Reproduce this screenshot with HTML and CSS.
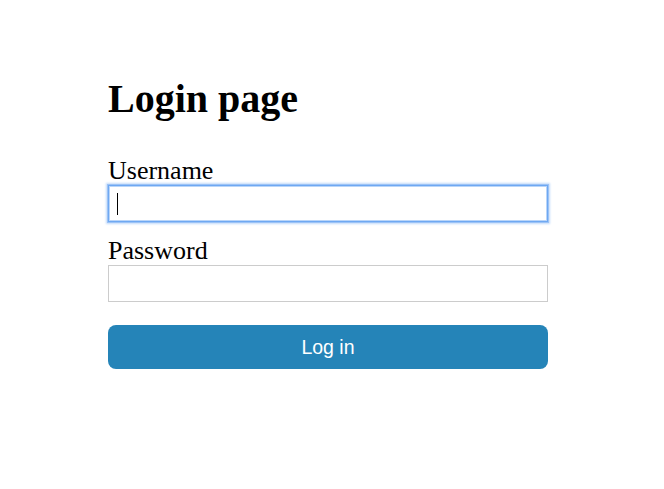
FILE: index.html
```html
<!DOCTYPE html>
<html>
<head>
  <title>Login page</title>
  <link rel="stylesheet" href="styles.css">
</head>
<body>
  <div class="login">
    <h1>Login page</h1>
    <form class="form">
      <label class="label" for="username">Username</label>
      <div class="field focused">
        <input id="username" class="input" type="text">
        <span class="caret"></span>
      </div>
      <label class="label" for="password">Password</label>
      <div class="field">
        <input id="password" class="input" type="password">
      </div>
      <button class="btn" type="button">Log in</button>
    </form>
  </div>
</body>
</html>
```

FILE: styles.css
```css
body {
  margin: 8px;
  font-family: "Liberation Serif", "Times New Roman", serif;
  color: #000;
  background: #fff;
}

.login {
  width: 440px;
  margin-left: 100px;
  padding-top: 68px;
}

h1 {
  font-size: 40px;
  font-weight: bold;
  line-height: 46px;
  margin: 0 0 35px 0;
}

.form {
  display: flex;
  flex-direction: column;
}

.label {
  font-size: 26px;
  line-height: 28px;
}

.field {
  position: relative;
  margin-bottom: 15px;
}

.input {
  display: block;
  box-sizing: border-box;
  width: 440px;
  height: 37px;
  margin: 0;
  padding: 0 8px;
  border: 1px solid #cccccc;
  border-radius: 0;
  font-size: 16px;
  outline: none;
  background: #fff;
}

.focused .input {
  border: 1px solid #6ea8f2;
  box-shadow: 0 0 0 1px #9cc3f6, 0 0 2px 2px #c4dbfa, inset 0 0 0 1px #b9d5f9;
}

.caret {
  position: absolute;
  left: 9px;
  top: 8px;
  width: 1px;
  height: 22px;
  background: #000;
}

.btn {
  margin-top: 8px;
  height: 44px;
  width: 440px;
  border: none;
  border-radius: 8px;
  background: #2584b8;
  color: #fff;
  font-family: "Liberation Sans", Arial, sans-serif;
  font-size: 19.5px;
  cursor: pointer;
}
```
